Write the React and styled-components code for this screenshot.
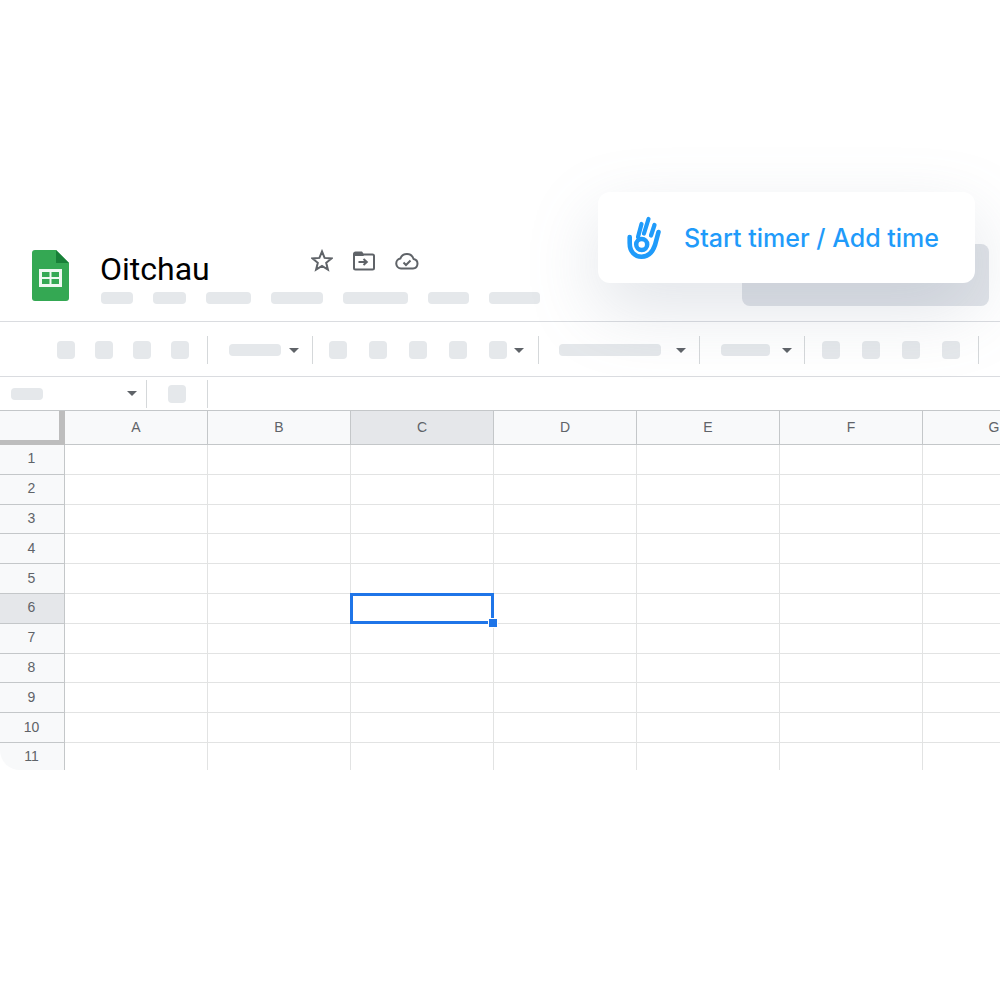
import React from "react"
import styled, { createGlobalStyle } from "styled-components"

const GlobalStyle = createGlobalStyle`
  html, body {
    margin: 0;
    padding: 0;
    background: #fff;
  }
  body {
    width: 1000px;
    height: 1000px;
    overflow: hidden;
    font-family: "Liberation Sans", Arial, sans-serif;
  }
`

const Page = styled.div`
  position: relative;
  width: 1000px;
  height: 1000px;
  padding-top: 244px;
  box-sizing: border-box;
  overflow: hidden;
`

const Header = styled.header`
  display: flex;
  height: 77px;
  padding-left: 32px;
  border-bottom: 1px solid #dadce0;
`

const LogoBox = styled.div`
  width: 37px;
  height: 51px;
  margin-top: 6px;
`

const DocBlock = styled.div`
  margin-left: 32px;
  display: flex;
  flex-direction: column;
`

const TitleRow = styled.div`
  display: flex;
  height: 48px;
`

const Title = styled.h1`
  width: 210px;
  margin: 0;
  padding-top: 7px;
  text-indent: -1px;
  font: 400 32px/36px Roboto, sans-serif;
  color: #000;
`

const DocIcons = styled.div`
  display: flex;
  align-items: flex-start;
  gap: 20px;
  padding-top: 5px;
`

const MenuBars = styled.div`
  display: flex;
  gap: 20px;
`

const Skeleton = styled.span`
  display: block;
  flex: none;
  width: ${p => p.$w}px;
  height: 12px;
  margin-left: ${p => p.$ml || 0}px;
  background: #e5e8eb;
  border-radius: 4px;
`

const ShareButton = styled.div`
  width: 247px;
  height: 62px;
  margin-left: auto;
  margin-right: 11px;
  background: #e0e3e8;
  border-radius: 8px;
`

const TimerCard = styled.div`
  position: absolute;
  left: 598px;
  top: 192px;
  width: 377px;
  height: 91px;
  display: flex;
  align-items: center;
  padding-left: 29px;
  box-sizing: border-box;
  background: #fff;
  border-radius: 12px;
  box-shadow: 0 26px 70px rgba(120, 130, 155, 0.22);
`

const TimerLabel = styled.span`
  margin-left: 23px;
  font: 500 25px/30px Inter, sans-serif;
  color: #1f9bfa;
`

const Toolbar = styled.div`
  display: flex;
  align-items: center;
  height: 55px;
  padding-top: 2px;
  box-sizing: border-box;
  border-bottom: 1px solid #dadce0;
`

const FormulaBar = styled.div`
  display: flex;
  align-items: center;
  height: 33px;
  border-bottom: 1px solid #c4c7c9;
`

const Square = styled.span`
  display: block;
  flex: none;
  width: 18px;
  height: 18px;
  margin-left: ${p => p.$ml}px;
  background: #e5e8eb;
  border-radius: 4px;
`

const Divider = styled.span`
  display: block;
  flex: none;
  width: 1px;
  height: 28px;
  margin-left: ${p => p.$ml}px;
  background: #d5d8da;
`

const Caret = styled.span`
  display: block;
  flex: none;
  width: 0;
  height: 0;
  margin-left: ${p => p.$ml}px;
  border-left: 5.5px solid transparent;
  border-right: 5.5px solid transparent;
  border-top: 5.5px solid #5f6368;
`

const Grid = styled.div`
  display: grid;
  grid-template-columns: 65px repeat(7, 143px);
  grid-template-rows: 34px repeat(10, 29.8px) 27px;
  width: 1066px;
`

const Corner = styled.div`
  background: #f8f9fa;
  border-right: 6px solid #bdbdbd;
  border-bottom: 5px solid #bdbdbd;
  box-sizing: border-box;
`

const ColHead = styled.div`
  display: flex;
  align-items: center;
  justify-content: center;
  box-sizing: border-box;
  padding-bottom: 2px;
  background: ${p => (p.$active ? "#e5e7ea" : "#f8f9fa")};
  border-right: 1px solid #c4c7c9;
  border-bottom: 1px solid #c4c7c9;
  font-size: 14px;
  color: #5f6368;
`

const RowHead = styled.div`
  display: flex;
  align-items: center;
  justify-content: center;
  box-sizing: border-box;
  padding-right: 1px;
  padding-bottom: ${p => (p.$last ? "0" : "2px")};
  background: ${p => (p.$active ? "#e5e7ea" : "#f8f9fa")};
  border-right: 1px solid #c4c7c9;
  border-bottom: ${p => (p.$last ? "none" : "1px solid #c4c7c9")};
  border-bottom-left-radius: ${p => (p.$last ? "20px" : "0")};
  font-size: 14px;
  color: #5f6368;
`

const Cell = styled.div`
  position: relative;
  box-sizing: border-box;
  border-right: 1px solid #e2e3e3;
  border-bottom: ${p => (p.$last ? "none" : "1px solid #e2e3e3")};
`

const Selection = styled.div`
  position: absolute;
  z-index: 1;
  left: -1px;
  top: -1px;
  right: -1px;
  bottom: -1px;
  border: 3px solid #1f75e8;
`

const Handle = styled.span`
  position: absolute;
  right: -7px;
  bottom: -7px;
  width: 8px;
  height: 8px;
  background: #1f75e8;
  border: 1px solid #fff;
`

const SheetsLogo = () => (
  <svg width="37" height="51" viewBox="0 0 37 51">
    <path d="M3 0h21l13 13v35a3 3 0 0 1-3 3H3a3 3 0 0 1-3-3V3a3 3 0 0 1 3-3z" fill="#34a853" />
    <path d="M24 0l13 13H24z" fill="#188038" />
    <path
      fillRule="evenodd"
      d="M7 19h23v18H7zM10 22v5h7.500v-5zM19.500 22v5H27v-5zM10 29v5h7.500v-5zM19.500 29v5H27v-5z"
      fill="#fff"
      fillOpacity="0.92"
    />
  </svg>
)

const StarIcon = () => (
  <svg width="22" height="23" viewBox="0 0 22 23">
    <path
      d="M11 2.500l2.600 6.400 6.900.5-5.300 4.400 1.700 6.700L11 16.900l-5.900 3.600 1.700-6.700-5.300-4.400 6.900-.5z"
      fill="none"
      stroke="#5f6368"
      strokeWidth="2"
      strokeLinejoin="miter"
    />
  </svg>
)

const FolderIcon = () => (
  <svg width="22" height="20" viewBox="0 0 22 20" style={{ marginTop: 2 }}>
    <path
      d="M1 3a1.500 1.500 0 0 1 1.500-1.500h6L10 3.500h9.500A1.500 1.500 0 0 1 21 5v12a1.500 1.500 0 0 1-1.500 1.500h-17A1.500 1.500 0 0 1 1 17z"
      fill="none"
      stroke="#5f6368"
      strokeWidth="2"
    />
    <path d="M1 2h8l2 3H1z" fill="#5f6368" />
    <path d="M5.500 11h8M10.500 8l3.300 3-3.300 3" fill="none" stroke="#5f6368" strokeWidth="2" />
  </svg>
)

const CloudIcon = () => (
  <svg width="24" height="18" viewBox="0 0 24 18" style={{ marginTop: 3 }}>
    <path
      d="M6 16.500a5 5 0 0 1-.7-9.900A7 7 0 0 1 18.600 7a4.800 4.800 0 0 1-.6 9.500z"
      fill="none"
      stroke="#5f6368"
      strokeWidth="2"
    />
    <path d="M8.500 10.500l2.500 2.500 4.500-4.500" fill="none" stroke="#5f6368" strokeWidth="2" />
  </svg>
)

const HandIcon = () => (
  <svg width="34" height="44" viewBox="0 0 34 44">
    <g fill="none" stroke="#1f9bfa" strokeLinecap="round">
      <path d="M2.700 21v6C2.700 36 8 40.700 14.500 40.700 22 40.700 26 35 28 29l3.500-13" strokeWidth="4.600" />
      <path d="M11 21l3.500-13" strokeWidth="4.200" />
      <path d="M17 17.500L21.500 3" strokeWidth="4.200" />
      <path d="M24 19.500l3.500-10.500" strokeWidth="4.200" />
      <circle cx="14.700" cy="28.500" r="5.500" strokeWidth="4.500" />
    </g>
  </svg>
)

const menuBars = [32, 33, 45, 52, 65, 41, 51]
const columns = ["A", "B", "C", "D", "E", "F", "G"]
const rows = [1, 2, 3, 4, 5, 6, 7, 8, 9, 10, 11]

export default function App() {
  return (
    <Page>
      <GlobalStyle />
      <Header>
        <LogoBox>
          <SheetsLogo />
        </LogoBox>
        <DocBlock>
          <TitleRow>
            <Title>Oitchau</Title>
            <DocIcons>
              <StarIcon />
              <FolderIcon />
              <CloudIcon />
            </DocIcons>
          </TitleRow>
          <MenuBars>
            {menuBars.map((w, i) => (
              <Skeleton key={i} $w={w} />
            ))}
          </MenuBars>
        </DocBlock>
        <ShareButton />
      </Header>

      <Toolbar>
        <Square $ml={57} />
        <Square $ml={20} />
        <Square $ml={20} />
        <Square $ml={20} />
        <Divider $ml={18} />
        <Skeleton $w={52} $ml={21} />
        <Caret $ml={8} />
        <Divider $ml={13} />
        <Square $ml={16} />
        <Square $ml={22} />
        <Square $ml={22} />
        <Square $ml={22} />
        <Square $ml={22} />
        <Caret $ml={7} />
        <Divider $ml={14} />
        <Skeleton $w={102} $ml={20} />
        <Caret $ml={15} />
        <Divider $ml={13} />
        <Skeleton $w={49} $ml={21} />
        <Caret $ml={12} />
        <Divider $ml={12} />
        <Square $ml={17} />
        <Square $ml={22} />
        <Square $ml={22} />
        <Square $ml={22} />
        <Divider $ml={18} />
      </Toolbar>

      <FormulaBar>
        <Skeleton $w={32} $ml={11} />
        <Caret $ml={84} />
        <Divider $ml={9} />
        <Square $ml={21} />
        <Divider $ml={21} />
      </FormulaBar>

      <Grid>
        <Corner />
        {columns.map(c => (
          <ColHead key={c} $active={c === "C"}>
            {c}
          </ColHead>
        ))}
        {rows.map(r => (
          <React.Fragment key={r}>
            <RowHead $active={r === 6} $last={r === 11}>
              {r}
            </RowHead>
            {columns.map(c => (
              <Cell key={c} $last={r === 11}>
                {r === 6 && c === "C" && (
                  <Selection>
                    <Handle />
                  </Selection>
                )}
              </Cell>
            ))}
          </React.Fragment>
        ))}
      </Grid>

      <TimerCard>
        <HandIcon />
        <TimerLabel>Start timer / Add time</TimerLabel>
      </TimerCard>
    </Page>
  )
}
